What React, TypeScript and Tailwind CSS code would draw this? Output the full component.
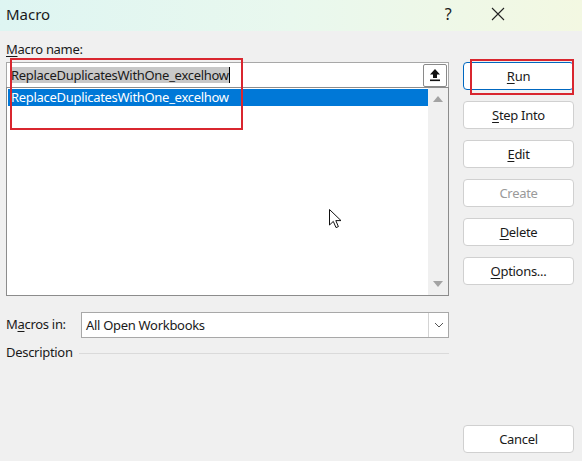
import React from 'react';

const font = { fontFamily: '"Noto Sans", "Open Sans", Arial, sans-serif' };

function DialogButton({ label, ul, primary, disabled }: { label: string; ul?: number; primary?: boolean; disabled?: boolean }) {
  const text =
    ul === undefined ? (
      label
    ) : (
      <>
        {label.slice(0, ul)}
        <u className="underline-offset-2">{label[ul]}</u>
        {label.slice(ul + 1)}
      </>
    );
  return (
    <button
      className={`h-[28px] w-[111px] rounded-[4px] bg-white text-[13px] leading-none flex items-center justify-center pt-px ${
        primary ? 'border border-[#0067c0]' : 'border border-[#d0d0d0]'
      } ${disabled ? 'text-[#9a9a9a]' : 'text-[#1a1a1a]'}`}
    >
      <span>{text}</span>
    </button>
  );
}

export default function App() {
  return (
    <div className="relative w-[582px] h-[461px] overflow-hidden bg-[#f0f0f0] text-[#1a1a1a] tracking-[-0.3px]" style={font}>
      {/* title bar */}
      <div className="h-[31px] flex items-center pb-[3px] bg-gradient-to-r from-[#def5f2] via-[#e9f8ee] to-[#f3f8e2]">
        <div className="pl-[6px] text-[15px] flex-1 tracking-normal">Macro</div>
        <div className="w-[30px] text-center text-[16px] mr-[28px]">?</div>
        <svg width="14" height="14" viewBox="0 0 14 14" className="mr-[77px]">
          <path d="M1 1L13 13M13 1L1 13" stroke="#222" strokeWidth="1.1" />
        </svg>
      </div>

      <div className="flex px-[6px] h-[430px]">
        {/* left column */}
        <div className="w-[443px] flex flex-col">
          <div className="mt-[10px] h-[21px] text-[13px] leading-[16px]">
            <u className="underline-offset-2">M</u>acro name:
          </div>
          <div className="h-[25px] flex items-center bg-white border border-[#a8a8a8] border-b-0">
            <div className="flex-1 flex items-center pl-[4px] text-[13px] leading-[16px]">
              <span className="bg-[#c8c8c8]">ReplaceDuplicatesWithOne_excelhow</span>
              <span className="w-px h-[16px] bg-black"></span>
            </div>
            <div className="w-[24px] h-[23px] mr-px border border-[#8a8a8a] rounded-[2px] bg-white flex items-center justify-center">
              <svg width="12" height="14" viewBox="0 0 12 14">
                <path d="M6 1L11 6.5H8V10H4V6.5H1Z" fill="#111" />
                <rect x="1" y="11.5" width="10" height="1.6" fill="#111" />
              </svg>
            </div>
          </div>
          <div className="h-[209px] flex bg-white border border-[#8c8c8c]">
            <div className="flex-1 pt-px pl-px">
              <div className="h-[17px] bg-[#0078d7] text-white text-[13px] leading-[17px] pl-[3px]">
                ReplaceDuplicatesWithOne_excelhow
              </div>
            </div>
            <div className="w-[20px] bg-[#f0f0f0] flex flex-col items-center justify-between py-[8px]">
              <svg width="10" height="6" viewBox="0 0 10 6">
                <path d="M5 0L10 6H0Z" fill="#a3a3a3" />
              </svg>
              <svg width="10" height="6" viewBox="0 0 10 6">
                <path d="M0 0H10L5 6Z" fill="#a3a3a3" />
              </svg>
            </div>
          </div>

          <div className="mt-[16px] flex items-center h-[26px]">
            <div className="w-[75px] text-[13px]">
              M<u className="underline-offset-2">a</u>cros in:
            </div>
            <div className="flex-1 h-[26px] flex bg-white border border-[#a8a8a8]">
              <div className="flex-1 pl-[4px] text-[13px] leading-[24px]">All Open Workbooks</div>
              <div className="w-[20px] border-l border-[#d4d4d4] flex items-center justify-center">
                <svg width="10" height="6" viewBox="0 0 10 6">
                  <path d="M1 1L5 5L9 1" stroke="#555" strokeWidth="1" fill="none" />
                </svg>
              </div>
            </div>
          </div>

          <div className="mt-[5px] flex items-center h-[20px]">
            <div className="text-[13px] pr-[6px]">Description</div>
            <div className="flex-1 h-px bg-[#dadada]"></div>
          </div>
        </div>

        {/* right column */}
        <div className="ml-[14px] flex flex-col pt-[31px] pb-[8px] gap-[11px]">
          <DialogButton label="Run" ul={0} primary />
          <DialogButton label="Step Into" ul={0} />
          <DialogButton label="Edit" ul={0} />
          <DialogButton label="Create" disabled />
          <DialogButton label="Delete" ul={0} />
          <DialogButton label="Options..." ul={0} />
          <div className="mt-auto">
            <DialogButton label="Cancel" />
          </div>
        </div>
      </div>

      {/* mouse pointer */}
      <svg width="14" height="20" viewBox="0 0 14 20" className="absolute left-[329px] top-[209px]">
        <path d="M0.5 0.5V16L4.3 12.4L7 18.6L9.4 17.6L6.8 11.6H12Z" fill="white" stroke="#111" strokeWidth="1" strokeLinejoin="round" />
      </svg>

      {/* red annotation boxes */}
      <div className="absolute left-[10px] top-[58px] w-[233px] h-[72px] border-2 border-[#d9262f]"></div>
      <div className="absolute left-[470px] top-[59px] w-[104px] h-[36px] border-2 border-[#d9262f]"></div>
    </div>
  );
}
